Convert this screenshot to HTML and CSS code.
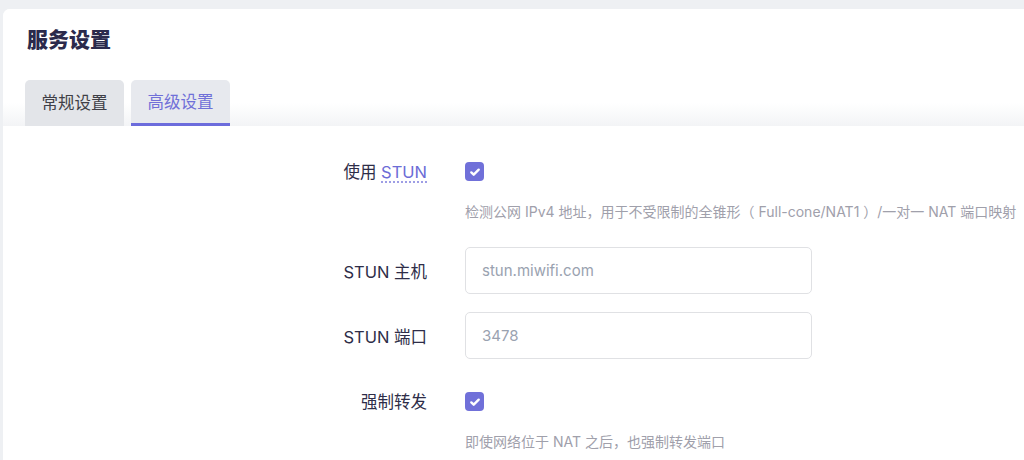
FILE: index.html
```html
<!DOCTYPE html>
<html lang="zh-CN">
<head>
  <meta charset="UTF-8" />
  <meta name="viewport" content="width=device-width, initial-scale=1.0"/>
  <title>服务设置</title>
  <link rel="stylesheet" href="styles.css">
</head>
<body>

  <div class="card">
    <!-- Header: title and tabs -->
    <div class="card-head">
      <h2>服务设置</h2>
      <div class="tabs">
        <div class="tab">常规设置</div>
        <div class="tab active">高级设置</div>
      </div>
    </div>

    <!-- Advanced settings form -->
    <div class="card-body">
      <div class="field">
        <label class="field-label">使用 <abbr title="Session Traversal Utilities for NAT">STUN</abbr></label>
        <div class="field-control">
          <span class="checkbox checked">
            <svg viewBox="0 0 12 12" width="12" height="12"><path d="M2.3 6.4l2.4 2.3 5-5" fill="none" stroke="#fff" stroke-width="2.4" stroke-linecap="round" stroke-linejoin="round"/></svg>
          </span>
        </div>
      </div>
      <p class="help">检测公网 IPv4 地址，用于不受限制的全锥形（ Full-cone/NAT1 ）/一对一 NAT 端口映射</p>

      <div class="field">
        <label class="field-label" for="stunHost">STUN 主机</label>
        <div class="field-control">
          <input type="text" id="stunHost" placeholder="stun.miwifi.com" />
        </div>
      </div>

      <div class="field">
        <label class="field-label" for="stunPort">STUN 端口</label>
        <div class="field-control">
          <input type="text" id="stunPort" placeholder="3478" />
        </div>
      </div>

      <div class="field">
        <label class="field-label">强制转发</label>
        <div class="field-control">
          <span class="checkbox checked">
            <svg viewBox="0 0 12 12" width="12" height="12"><path d="M2.3 6.4l2.4 2.3 5-5" fill="none" stroke="#fff" stroke-width="2.4" stroke-linecap="round" stroke-linejoin="round"/></svg>
          </span>
        </div>
      </div>
      <p class="help">即使网络位于 NAT 之后，也强制转发端口</p>
    </div>
  </div>

</body>
</html>
```

FILE: styles.css
```css
* {
  box-sizing: border-box;
}

body {
  margin: 0;
  padding: 9px 0 0 3px;
  font-family: Inter, "Noto Sans CJK SC", sans-serif;
  background-color: #eef0f3;
  overflow: hidden;
  height: 460px;
}

.card {
  width: 1040px;
  min-height: 451px;
  background: white;
  border-radius: 7px 0 0 0;
}

.card-head {
  padding: 17px 0 0 22px;
  background: linear-gradient(to bottom, #fff 0, #fff 80%, #f3f4f6 100%);
  border-radius: 7px 0 0 0;
}

h2 {
  margin: 0 0 26px 2px;
  font-size: 21px;
  line-height: 28px;
  font-weight: 800;
  color: #2b2a4c;
}

.tabs {
  display: flex;
  gap: 7px;
}

.tab {
  width: 99px;
  height: 46px;
  line-height: 46px;
  text-align: center;
  font-size: 16.5px;
  color: #3f3f46;
  background-color: #e3e5e9;
  border-radius: 5px 5px 0 0;
}

.tab.active {
  color: #7070d8;
  background-color: #e7e9ee;
  border-bottom: 3px solid #6c6cdc;
  line-height: 44px;
}

.card-body {
  padding-top: 21px;
}

.field {
  display: grid;
  grid-template-columns: 424px 347px;
  column-gap: 38px;
  align-items: center;
  min-height: 47px;
  margin-bottom: 18px;
}

.field-label {
  text-align: right;
  font-size: 16.5px;
  color: #2e2d48;
}

abbr {
  color: #6c6cd6;
  text-decoration: underline dotted #8a8ae0;
  text-underline-offset: 4px;
}

.checkbox {
  display: inline-flex;
  align-items: center;
  justify-content: center;
  width: 19px;
  height: 19px;
  border-radius: 4px;
  background-color: #7070d9;
  vertical-align: middle;
}

input[type="text"] {
  width: 100%;
  height: 47px;
  padding: 0 16px;
  font-family: Inter, "Noto Sans CJK SC", sans-serif;
  font-size: 15px;
  border: 1px solid #e0e1e4;
  border-radius: 5px;
  background: white;
}

input::placeholder {
  color: #9aa2b0;
}

.help {
  margin: -10px 0 25px 462px;
  font-size: 14px;
  line-height: 20px;
  color: #a0a0ab;
}
```
